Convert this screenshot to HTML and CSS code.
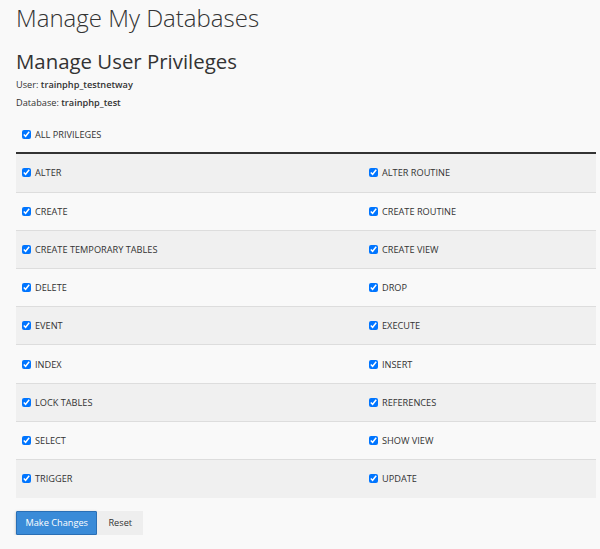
FILE: index.html
```html
<!DOCTYPE html>
<html lang="en">
<head>
    <meta charset="UTF-8">
    <title>Manage My Databases</title>
    <link rel="stylesheet" href="styles.css">
</head>
<body>

    <h1>Manage My Databases</h1>

    <h2>Manage User Privileges</h2>
    <p class="info">User: <b>trainphp_testnetway</b></p>
    <p class="info">Database: <b>trainphp_test</b></p>

    <div class="all-row">
        <label><input type="checkbox" checked> ALL PRIVILEGES</label>
    </div>

    <table class="priv-table">
        <tr>
            <td><label><input type="checkbox" checked> ALTER</label></td>
            <td><label><input type="checkbox" checked> ALTER ROUTINE</label></td>
        </tr>
        <tr>
            <td><label><input type="checkbox" checked> CREATE</label></td>
            <td><label><input type="checkbox" checked> CREATE ROUTINE</label></td>
        </tr>
        <tr>
            <td><label><input type="checkbox" checked> CREATE TEMPORARY TABLES</label></td>
            <td><label><input type="checkbox" checked> CREATE VIEW</label></td>
        </tr>
        <tr>
            <td><label><input type="checkbox" checked> DELETE</label></td>
            <td><label><input type="checkbox" checked> DROP</label></td>
        </tr>
        <tr>
            <td><label><input type="checkbox" checked> EVENT</label></td>
            <td><label><input type="checkbox" checked> EXECUTE</label></td>
        </tr>
        <tr>
            <td><label><input type="checkbox" checked> INDEX</label></td>
            <td><label><input type="checkbox" checked> INSERT</label></td>
        </tr>
        <tr>
            <td><label><input type="checkbox" checked> LOCK TABLES</label></td>
            <td><label><input type="checkbox" checked> REFERENCES</label></td>
        </tr>
        <tr>
            <td><label><input type="checkbox" checked> SELECT</label></td>
            <td><label><input type="checkbox" checked> SHOW VIEW</label></td>
        </tr>
        <tr>
            <td><label><input type="checkbox" checked> TRIGGER</label></td>
            <td><label><input type="checkbox" checked> UPDATE</label></td>
        </tr>
    </table>

    <div class="button-container">
        <button class="btn-primary">Make Changes</button>
        <button class="btn-reset">Reset</button>
    </div>

</body>
</html>
```

FILE: styles.css
```css
body {
    font-family: "Open Sans", Arial, sans-serif;
    background-color: #f9f9f9;
    color: #333;
    margin: 0;
    padding: 0 4px 0 16px;
    font-size: 9.2px;
}
h1 {
    font-weight: 300;
    font-size: 24px;
    margin: 0;
    padding-top: 1px;
    line-height: 34px;
}
h2 {
    font-weight: 500;
    font-size: 20.4px;
    margin: 10px 0 0 0;
    line-height: 32px;
}
.info {
    margin: 0;
    line-height: 18px;
}
.info:first-of-type {
    margin-top: -1px;
}
.info b {
    font-weight: 600;
}
label {
    display: flex;
    align-items: center;
    gap: 2px;
}
input[type="checkbox"] {
    width: 9px;
    height: 9px;
    margin: 0 2px 0 0;
    accent-color: #0075ff;
}
.all-row {
    padding: 16px 6px 0 6px;
    height: 24px;
    border-bottom: 2px solid #333;
}
.priv-table {
    width: 100%;
    border-collapse: collapse;
}
.priv-table td {
    height: 38.2px;
    padding: 0 6px;
    box-sizing: border-box;
    border-top: 1px solid #ddd;
}
.priv-table tr:first-child td {
    border-top: none;
}
.priv-table tr:nth-child(odd) {
    background-color: #f0f0f0;
}
.priv-table td:first-child {
    width: 347px;
}
.button-container {
    display: flex;
    margin-top: 13px;
}
button {
    font-family: "Open Sans", Arial, sans-serif;
    font-size: 9.2px;
    height: 24px;
    border: none;
    cursor: pointer;
}
.btn-primary {
    background-color: #3a8bd8;
    color: white;
    border: 1px solid #2a6fb5;
    border-radius: 1px;
    padding: 0 8.5px;
    box-shadow: 0 1px 3px rgba(0, 0, 0, 0.3);
}
.btn-reset {
    background-color: #eee;
    color: #333;
    padding: 0 11px;
}
```
